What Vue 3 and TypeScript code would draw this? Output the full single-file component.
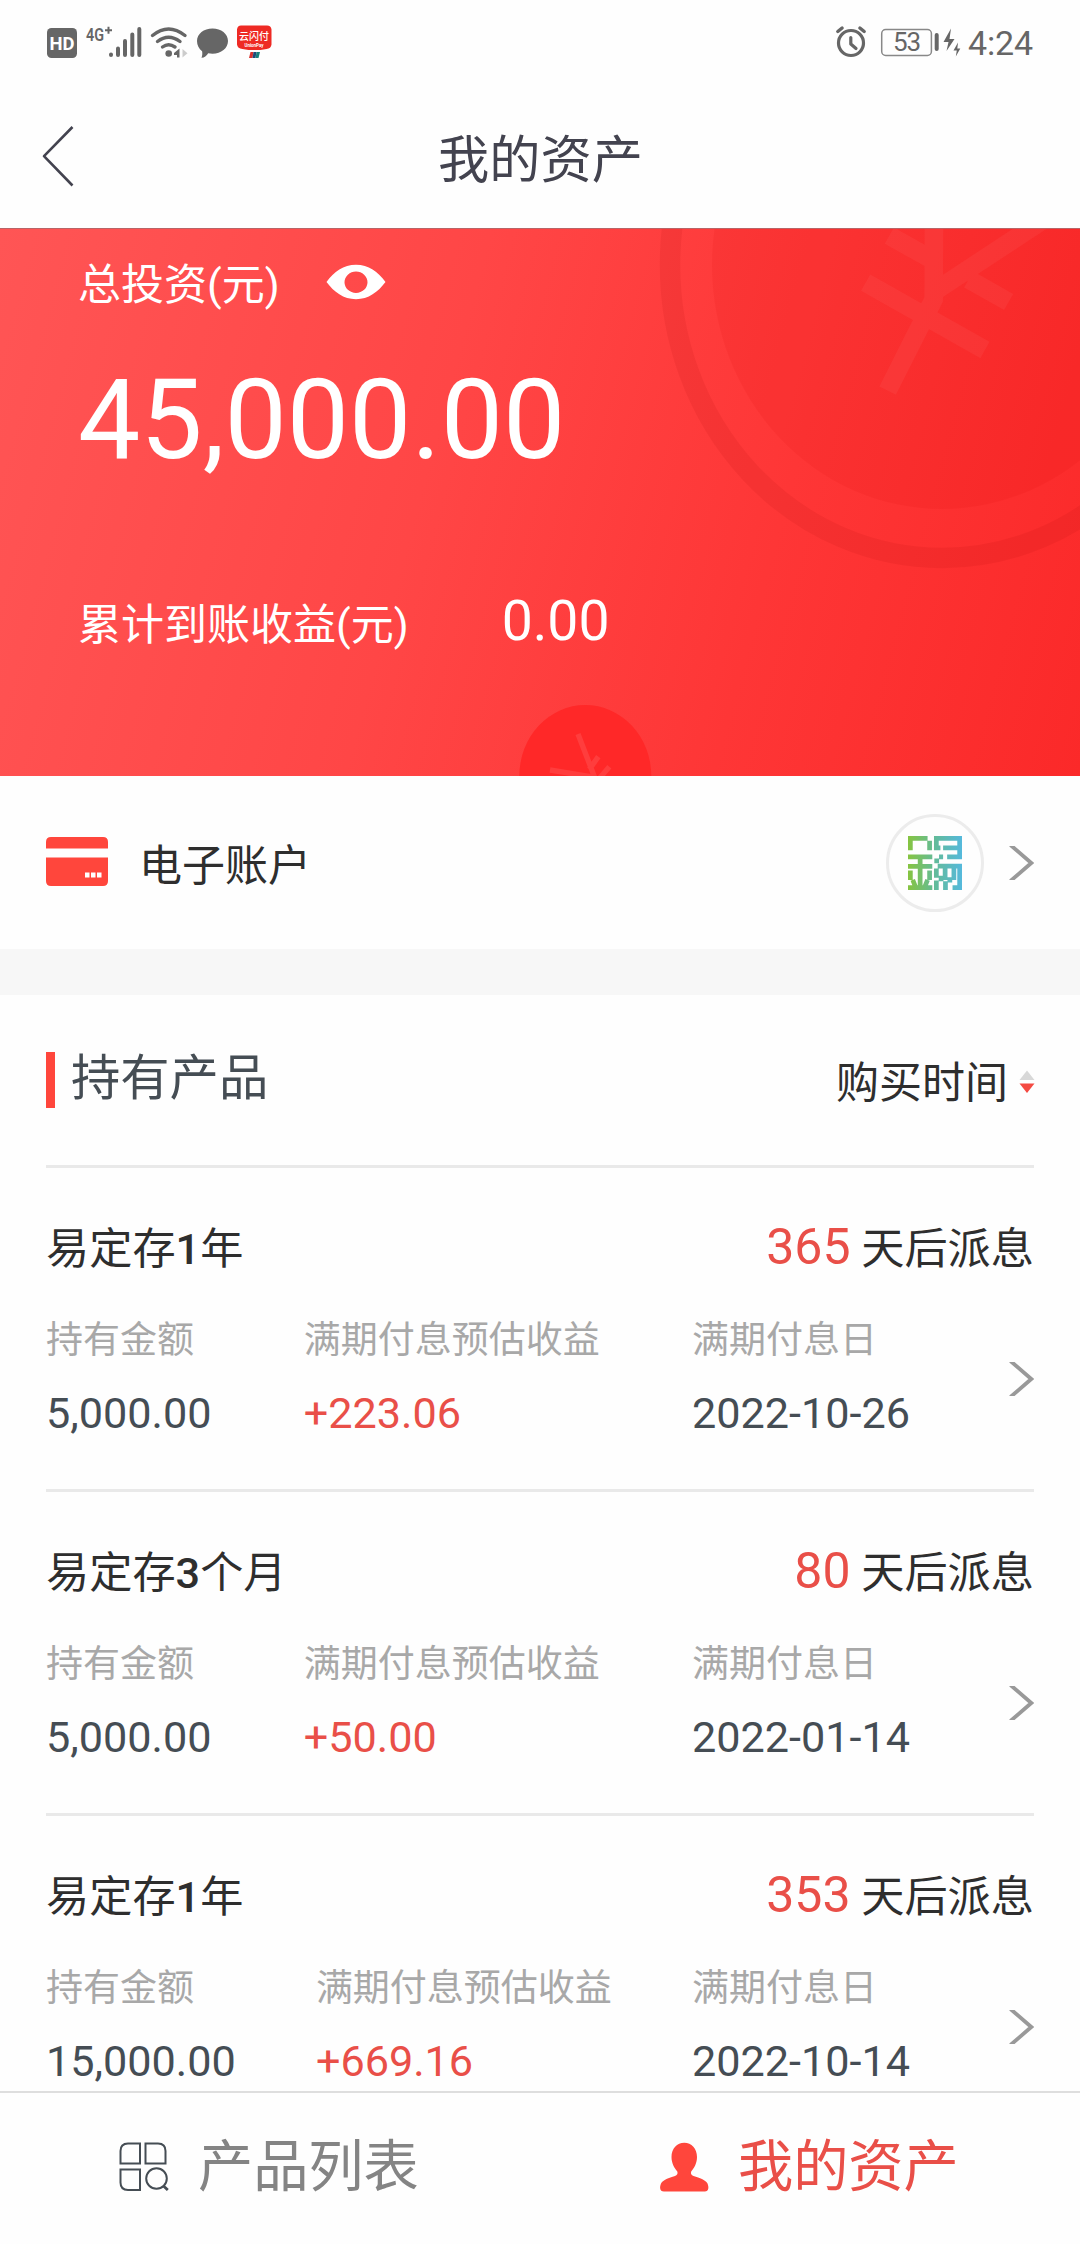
<script setup lang="ts">
interface Holding {
  name: [string, string, string]
  days: string
  amount: string
  profit: string
  date: string
}

const holdings: Holding[] = [
  { name: ['易定存', '1', '年'], days: '365', amount: '5,000.00', profit: '+223.06', date: '2022-10-26' },
  { name: ['易定存', '3', '个月'], days: '80', amount: '5,000.00', profit: '+50.00', date: '2022-01-14' },
  { name: ['易定存', '1', '年'], days: '353', amount: '15,000.00', profit: '+669.16', date: '2022-10-14' },
]
</script>

<template>
  <div class="screen">
    <div class="status">
      <svg class="status-left" width="240" height="84" viewBox="0 0 240 84">
        <rect x="7" y="28" width="30" height="30" rx="4.5" fill="#666" />
        <text x="22" y="49.500" text-anchor="middle" font-size="19" font-weight="700" fill="#fff" textLength="25" lengthAdjust="spacingAndGlyphs">HD</text>
        <text x="46" y="41" font-size="19" font-weight="600" fill="#666" textLength="18" lengthAdjust="spacingAndGlyphs">4G</text>
        <path d="M65 30.200h7M68.500 26.700v7" stroke="#666" stroke-width="2" />
        <g stroke="#666" stroke-width="4" stroke-linecap="round">
          <path d="M71 54.500v.5M78 48.500v6.500M85 41v14M92.300 34.500v20.500M99.300 29v26" />
        </g>
        <g fill="none" stroke="#666" stroke-width="3.400" stroke-linecap="round">
          <path d="M112.500 35.500Q128.500 22.500 145 35.500" />
          <path d="M117.500 41.500Q128.500 33 140 41.500" />
          <path d="M122.500 47Q128.500 42.500 135 47" />
        </g>
        <circle cx="128.700" cy="53.500" r="3.300" fill="#666" />
        <path d="M139.500 48.500v9h-2.500v-2.500h-3v-2z" fill="#666" />
        <path d="M142.500 49v8.500l5-4.200z" fill="#ccc" />
        <path d="M172.500 28.500c8.700 0 15.500 5.400 15.500 12.500s-6.800 12.700-15.500 12.700c-1.500 0-3-.2-4.300-.5-1.500 2.800-4.200 4.600-6.700 4.500.8-1.900 1-4 .6-6.500-3.200-2.400-5.100-6-5.100-10.200 0-7.100 6.800-12.500 15.500-12.500z" fill="#666" />
        <path d="M201 25.500h26q4 0 4.500 4v15q-.5 4-5 4.500l-6 1h-12l-6-1q-5-.5-5.500-4.500v-15q.5-4 4-4z" fill="#ee2a24" />
        <text x="214" y="39.500" text-anchor="middle" font-size="10.500" font-weight="500" fill="#fff" textLength="30" lengthAdjust="spacingAndGlyphs">云闪付</text>
        <text x="214" y="46.500" text-anchor="middle" font-size="6" font-weight="700" fill="#fff" textLength="19" lengthAdjust="spacingAndGlyphs">UnionPay</text>
        <path d="M210.500 52h3l-1 6h-3.500z" fill="#d8322e" />
        <path d="M213.500 52h3l-1 6h-3z" fill="#1f4a78" />
        <path d="M216.500 52h3.500l-1.500 6h-3z" fill="#16807c" />
      </svg>
      <svg class="status-right" width="210" height="84" viewBox="830 0 210 84">
        <g fill="none" stroke="#666" stroke-linecap="round">
          <circle cx="851" cy="43" r="12.500" stroke-width="3.200" />
          <path d="M850.800 37.500v6.500l5.200 4.500" stroke-width="3.200" stroke-linejoin="round" />
          <path d="M837.800 31.500l4.300-3.500M864.200 31.500l-4.300-3.500" stroke-width="3.400" />
          <rect x="881.700" y="29.500" width="49.700" height="26" rx="4" stroke="#888" stroke-width="1.500" />
          <path d="M936.700 35v14" stroke-width="4" />
        </g>
        <text x="907" y="51.300" text-anchor="middle" font-size="26" fill="#666" textLength="28">53</text>
        <path d="M951 28.500l-7.500 13.500h5l-2 9 8-12h-5zM958 42.500l-4.500 8h3.300l-1 6 4.500-8h-3z" fill="#666" />
        <text x="968" y="55" font-size="34" fill="#666" textLength="65">4:24</text>
      </svg>
    </div>

    <header class="nav">
      <svg class="back" width="34" height="64" viewBox="0 0 34 64" fill="none" stroke="#43434f" stroke-width="2.600">
        <path d="M31.500 3L3 32.200L31.500 61.500" stroke-linejoin="round" />
      </svg>
      <h1>我的资产</h1>
    </header>

    <section class="hero">
      <svg class="hero-art" width="1080" height="547" viewBox="0 0 1080 547">
        <ellipse cx="942" cy="36" rx="272" ry="293" fill="none" stroke="#900" stroke-opacity=".09" stroke-width="20.500" />
        <ellipse cx="942" cy="36" rx="230" ry="244" fill="#d00000" fill-opacity=".09" />
        <g transform="translate(620 -9) scale(.33333)" opacity=".045" fill="none" stroke="#fff" stroke-width="56">
          <path d="M803 512L941 238L942 0M941 216L1330 -40M737 188L1095 390M808 47L930 115M1046 178L1166 246" />
        </g>
        <ellipse cx="585.300" cy="547" rx="66" ry="71" fill="#ff2828" />
        <g transform="translate(500 451) scale(.33333)" fill="none" stroke="#ff3d3d" stroke-width="16">
          <path d="M234 162L287 300M150 270L285 292M268 268L295 230M290 305L328 260" />
        </g>
      </svg>
      <div class="hero-label">
        <span>总投资(元)</span>
        <svg class="eye" width="60" height="36" viewBox="0 0 60 36">
          <path fill="#fff" fill-rule="evenodd" d="M.5 18C8 8 17.500.8 30 .8S52 8 59.500 18C52 28 42.500 35.200 30 35.200S8 28 .5 18zM30 7.500a11.500 10.700 0 1 0 0 21.400a11.500 10.700 0 1 0 0-21.400z" />
        </svg>
      </div>
      <div class="total">45,000.00</div>
      <div class="income"><span>累计到账收益(元)</span><b>0.00</b></div>
    </section>

    <section class="account">
      <svg class="card" width="62" height="49" viewBox="0 0 62 49">
        <path d="M5 0h52q5 0 5 5v6.500H0V5q0-5 5-5zM0 20.500h62V44q0 5-5 5H5q-5 0-5-5z" fill="#ff463c" />
        <path d="M39 35.500h4.500v5H39zM45 35.500h4.500v5H45zM51 35.500h4.500v5H51z" fill="#fff" />
      </svg>
      <span class="account-name">电子账户</span>
      <div class="bank">
        <svg width="54" height="54" viewBox="0 0 160 160">
          <defs>
            <linearGradient id="bank-tint" gradientUnits="userSpaceOnUse" x1="0" y1="0" x2="160" y2="0">
              <stop offset="0" stop-color="#86c440" />
              <stop offset=".5" stop-color="#62bb9a" />
              <stop offset="1" stop-color="#55b9dc" />
            </linearGradient>
          </defs>
          <g fill="none" stroke="url(#bank-tint)" stroke-width="14">
            <path d="M7 42V7H58M64 14V42M0 62H72M36 62V90M0 90H72M7 102V130M36 96V146M64 102V130M0 153H72M14 130L22 150M58 130L50 150" />
            <path d="M84 42V7H153V62H116M104 35H150M84 35H96M92 62H104M78 74H92M88 89H160M153 89V153H132M84 96V124M110 96V130M136 96V130M98 118V134M84 132V160M111 134V160M124 122V138" />
          </g>
        </svg>
      </div>
      <svg class="chevron" width="26" height="34" viewBox="0 0 26 34" fill="none" stroke="#999" stroke-width="3.800">
        <path d="M2.500-1L23.300 17L2.500 35" />
      </svg>
    </section>

    <section class="products">
      <div class="products-head">
        <i class="marker"></i>
        <h2>持有产品</h2>
        <span class="sort">购买时间</span>
        <svg class="sort-icon" width="16" height="24" viewBox="0 0 16 24">
          <path d="M8 .5L15.500 10H.5z" fill="#d8d8d8" />
          <path d="M.5 13.500h15L8 23z" fill="#f44a42" />
        </svg>
      </div>
      <article v-for="item in holdings" :key="item.date" class="holding">
        <div class="holding-top">
          <h3>{{ item.name[0] }}<b>{{ item.name[1] }}</b>{{ item.name[2] }}</h3>
          <p><em>{{ item.days }}</em> 天后派息</p>
        </div>
        <div class="holding-body">
          <dl>
            <div><dt>持有金额</dt><dd>{{ item.amount }}</dd></div>
            <div><dt>满期付息预估收益</dt><dd class="profit">{{ item.profit }}</dd></div>
            <div><dt>满期付息日</dt><dd>{{ item.date }}</dd></div>
          </dl>
          <svg class="chevron" width="26" height="34" viewBox="0 0 26 34" fill="none" stroke="#999" stroke-width="3.800">
            <path d="M2.500-1L23.300 17L2.500 35" />
          </svg>
        </div>
      </article>
    </section>

    <nav class="tabs">
      <div class="tab">
        <svg width="50" height="50" viewBox="0 0 50 50" fill="none" stroke="#454d54" stroke-width="2">
          <path d="M21 1.500V21.500H1.500V9q0-7.500 7.500-7.500zM26.500 1.500H39q7.500 0 7.500 7.500V21.500H26.500zM1.500 27.500H21V48H9q-7.500 0-7.500-7.500z" />
          <ellipse cx="37.500" cy="36.500" rx="10.300" ry="10.300" />
          <path d="M44.500 44l4.300 4" stroke-width="2.800" />
        </svg>
        <span>产品列表</span>
      </div>
      <div class="tab active">
        <svg width="50" height="50" viewBox="0 0 50 50">
          <path d="M25.300.8C32.500.8 38 6.500 38 15c0 6-2.700 11-5.800 14.500-.8 2 .2 3.800 2.300 4.500 6.500 2 11.500 3.500 14 7.500.8 2 1 3.500.8 5-.3 2-1.500 3-3.500 3H5c-2.300 0-3.600-1-3.800-3-.2-1.500 0-3 .8-5 2.500-4 7.500-5.500 14-7.500 2.100-.7 3.100-2.500 2.300-4.500C15.200 26 12.500 21 12.500 15 12.500 6.500 18 .8 25.300.8z" fill="#ff463c" />
        </svg>
        <span>我的资产</span>
      </div>
    </nav>
  </div>
</template>

<style>
body {
  margin: 0;
  background: #fff;
}
</style>

<style scoped>
.screen {
  display: flex;
  flex-direction: column;
  width: 1080px;
  height: 2244px;
  overflow: hidden;
  background: #fefefe;
  color: #2e2e2e;
  font-family: Roboto, "Noto Sans CJK SC", sans-serif;
}
h1, h2, h3, p, dl, dd {
  margin: 0;
  font-weight: 400;
}
svg {
  display: block;
  flex: none;
}
.status {
  display: flex;
  justify-content: space-between;
  height: 84px;
  padding: 0 40px;
  flex: none;
}
.nav {
  display: grid;
  grid-template-columns: 200px 1fr 200px;
  height: 144px;
  flex: none;
}
.back {
  margin: 40px 0 0 41px;
}
.nav h1 {
  padding: 5px 0 0 1px;
  font-size: 51.2px;
  line-height: 144px;
  text-align: center;
  color: #43434f;
}
.hero {
  position: relative;
  box-sizing: border-box;
  flex: none;
  height: 548px;
  padding: 26px 78px 0;
  border-top: 1px solid #b86466;
  overflow: hidden;
  background: linear-gradient(105deg, #ff5555 0%, #ff4646 40%, #fe3636 70%, #fb2929 100%);
  color: #fff;
}
.hero-art {
  position: absolute;
  left: 0;
  top: 0;
}
.hero-label {
  position: relative;
  display: flex;
  height: 60px;
  font-size: 43px;
  line-height: 60px;
}
.eye {
  margin: 9px 0 0 46px;
}
.total {
  position: relative;
  margin-top: 49px;
  font-size: 110.9px;
  line-height: 112px;
}
.income {
  position: relative;
  display: flex;
  align-items: baseline;
  gap: 93px;
  margin-top: 116px;
  font-size: 43px;
  line-height: 60px;
}
.income b {
  font-size: 55.3px;
  font-weight: 400;
}
.account {
  display: flex;
  align-items: center;
  flex: none;
  height: 173px;
  padding: 0 46px;
  border-bottom: 46px solid #f7f7f7;
}
.card {
  margin-top: -2px;
}
.account-name {
  margin: 7px auto 0 31px;
  font-size: 43px;
  line-height: 60px;
}
.bank {
  display: flex;
  align-items: center;
  justify-content: center;
  box-sizing: border-box;
  width: 98px;
  height: 98px;
  margin-right: 24px;
  border: 3px solid #ececec;
  border-radius: 50%;
}
.products {
  flex: 1;
  min-height: 0;
  overflow: hidden;
  padding: 0 46px;
}
.products-head {
  display: flex;
  align-items: center;
  height: 170px;
}
.marker {
  width: 9px;
  height: 56px;
  background: #ff463c;
}
.products-head h2 {
  margin: -5px auto 0 16px;
  font-size: 49.3px;
  line-height: 60px;
  color: #454d54;
}
.sort {
  margin: 6px 11px 0 0;
  font-size: 43px;
  line-height: 60px;
}
.sort-icon {
  margin: 4px -1px 0 0;
}
.holding {
  box-sizing: border-box;
  height: 324px;
  padding-top: 49px;
  border-top: 3px solid #e9e9e9;
}
.holding-top {
  display: flex;
  align-items: baseline;
  justify-content: space-between;
  height: 62px;
  font-size: 43px;
  line-height: 60px;
}
.holding-top h3 {
  font-size: 43.2px;
}
.holding-top b {
  font-weight: 500;
}
.holding-top p {
  font-size: 43.2px;
}
.holding-top em {
  font-style: normal;
  font-size: 50px;
  color: #e94f48;
}
.holding-body {
  display: flex;
  align-items: center;
  justify-content: space-between;
  margin-top: 37px;
}
.holding-body .chevron {
  margin-top: -2px;
}
.holding-body dl {
  display: flex;
  justify-content: space-between;
  width: 864px;
}
.holding-body dt {
  font-size: 37px;
  line-height: 50px;
  color: #a8a8a8;
}
.holding-body dd {
  margin-top: 18px;
  font-size: 43.2px;
  line-height: 60px;
  color: #454d54;
}
.holding-body .profit {
  color: #e94f48;
}
.tabs {
  display: flex;
  flex: none;
  box-sizing: border-box;
  height: 153px;
  border-top: 2px solid #dedede;
}
.tab {
  display: flex;
  align-items: center;
  width: 540px;
  box-sizing: border-box;
  padding-left: 119px;
  font-size: 55.2px;
  line-height: 80px;
  color: #848484;
}
.tab svg {
  margin-top: -3px;
}
.tab span {
  margin: -3px 0 0 29px;
}
.tab.active {
  color: #e94f48;
}
</style>
